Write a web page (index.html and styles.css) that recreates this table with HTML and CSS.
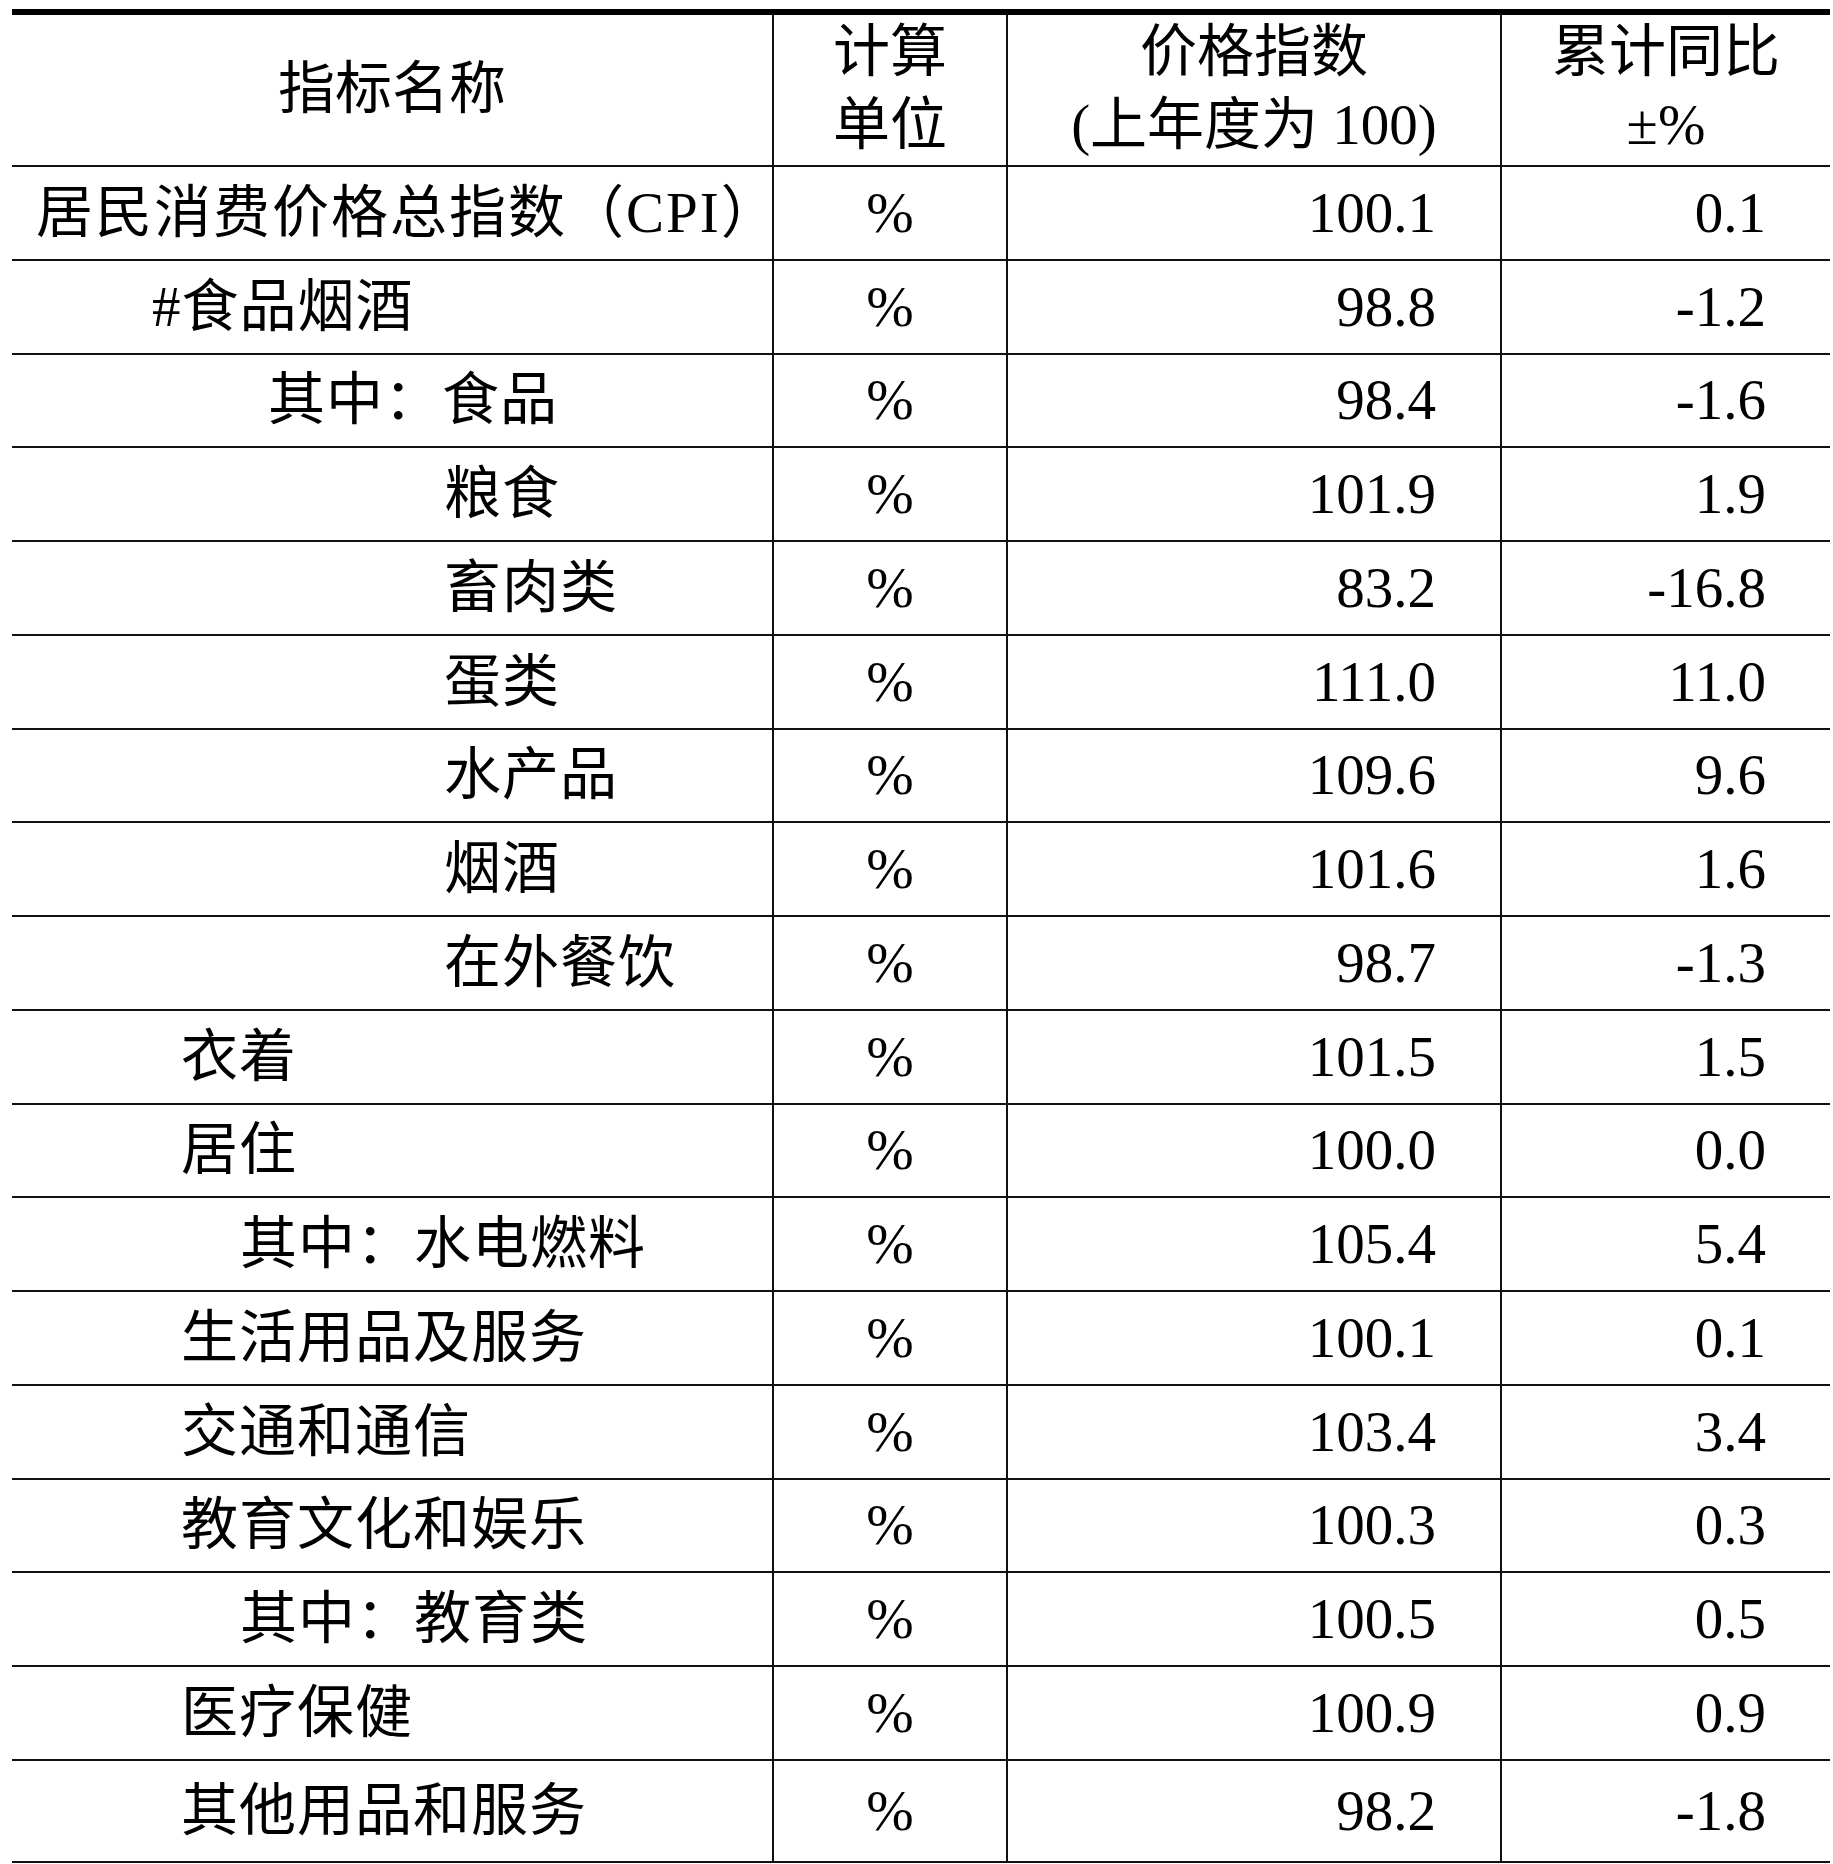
FILE: index.html
```html
<!DOCTYPE html>
<html lang="zh-CN">
<head>
<meta charset="utf-8">
<title>居民消费价格指数</title>
<link rel="stylesheet" href="styles.css">
</head>
<body>
<table class="cpi">
  <thead>
    <tr class="head">
      <th class="c1">指标名称</th>
      <th class="c2">计算<br>单位</th>
      <th class="c3">价格指数<br>(上年度为 100)</th>
      <th class="c4">累计同比<br>±%</th>
    </tr>
  </thead>
  <tbody>
    <tr><td class="name i0">居民消费价格总指数（CPI）</td><td class="unit">%</td><td class="num">100.1</td><td class="num">0.1</td></tr>
    <tr><td class="name i1">#食品烟酒</td><td class="unit">%</td><td class="num">98.8</td><td class="num">-1.2</td></tr>
    <tr><td class="name i2">其中：食品</td><td class="unit">%</td><td class="num">98.4</td><td class="num">-1.6</td></tr>
    <tr><td class="name i3">粮食</td><td class="unit">%</td><td class="num">101.9</td><td class="num">1.9</td></tr>
    <tr><td class="name i3">畜肉类</td><td class="unit">%</td><td class="num">83.2</td><td class="num">-16.8</td></tr>
    <tr><td class="name i3">蛋类</td><td class="unit">%</td><td class="num">111.0</td><td class="num">11.0</td></tr>
    <tr><td class="name i3">水产品</td><td class="unit">%</td><td class="num">109.6</td><td class="num">9.6</td></tr>
    <tr><td class="name i3">烟酒</td><td class="unit">%</td><td class="num">101.6</td><td class="num">1.6</td></tr>
    <tr><td class="name i3">在外餐饮</td><td class="unit">%</td><td class="num">98.7</td><td class="num">-1.3</td></tr>
    <tr><td class="name i4">衣着</td><td class="unit">%</td><td class="num">101.5</td><td class="num">1.5</td></tr>
    <tr><td class="name i4">居住</td><td class="unit">%</td><td class="num">100.0</td><td class="num">0.0</td></tr>
    <tr><td class="name i5">其中：水电燃料</td><td class="unit">%</td><td class="num">105.4</td><td class="num">5.4</td></tr>
    <tr><td class="name i4">生活用品及服务</td><td class="unit">%</td><td class="num">100.1</td><td class="num">0.1</td></tr>
    <tr><td class="name i4">交通和通信</td><td class="unit">%</td><td class="num">103.4</td><td class="num">3.4</td></tr>
    <tr><td class="name i4">教育文化和娱乐</td><td class="unit">%</td><td class="num">100.3</td><td class="num">0.3</td></tr>
    <tr><td class="name i5">其中：教育类</td><td class="unit">%</td><td class="num">100.5</td><td class="num">0.5</td></tr>
    <tr><td class="name i4">医疗保健</td><td class="unit">%</td><td class="num">100.9</td><td class="num">0.9</td></tr>
    <tr class="last"><td class="name i4">其他用品和服务</td><td class="unit">%</td><td class="num">98.2</td><td class="num">-1.8</td></tr>
  </tbody>
</table>
</body>
</html>
```
FILE: styles.css
```css
html, body {
  margin: 0;
  padding: 0;
  background: #ffffff;
}

body {
  padding: 9px 0 0 12px;
  font-family: "Liberation Serif", "Noto Sans CJK SC", serif;
  font-size: 57px;
  color: #000000;
}

.cpi {
  border-collapse: separate;
  border-spacing: 0;
  table-layout: fixed;
  width: 1818px;
  border-top: 6px solid #000000;
}

.cpi th,
.cpi td {
  box-sizing: border-box;
  padding: 0;
  border-bottom: 2px solid #111111;
  vertical-align: middle;
  font-weight: normal;
  white-space: nowrap;
}

.cpi th + th,
.cpi td + td {
  border-left: 2px solid #111111;
}

.c1 { width: 760px; }
.c2 { width: 234px; }
.c3 { width: 494px; }
.c4 { width: 330px; }

.cpi .head th {
  height: 152px;
  line-height: 73px;
  text-align: center;
  padding-bottom: 4px;
}

.cpi tbody tr {
  height: 93.76px;
}

.cpi tbody tr.last {
  height: 102px;
}

.cpi td {
  line-height: 68px;
}

.cpi td.name {
  text-align: left;
  letter-spacing: 1px;
}
.cpi td.unit { text-align: center; }
.cpi td.num {
  text-align: right;
  padding-right: 64px;
}

.cpi td.i0 { padding-left: 24px; letter-spacing: 2px; }
.cpi td.i1 { padding-left: 140px; }
.cpi td.i2 { padding-left: 256px; }
.cpi td.i3 { padding-left: 432px; }
.cpi td.i4 { padding-left: 169px; }
.cpi td.i5 { padding-left: 228px; }
```
